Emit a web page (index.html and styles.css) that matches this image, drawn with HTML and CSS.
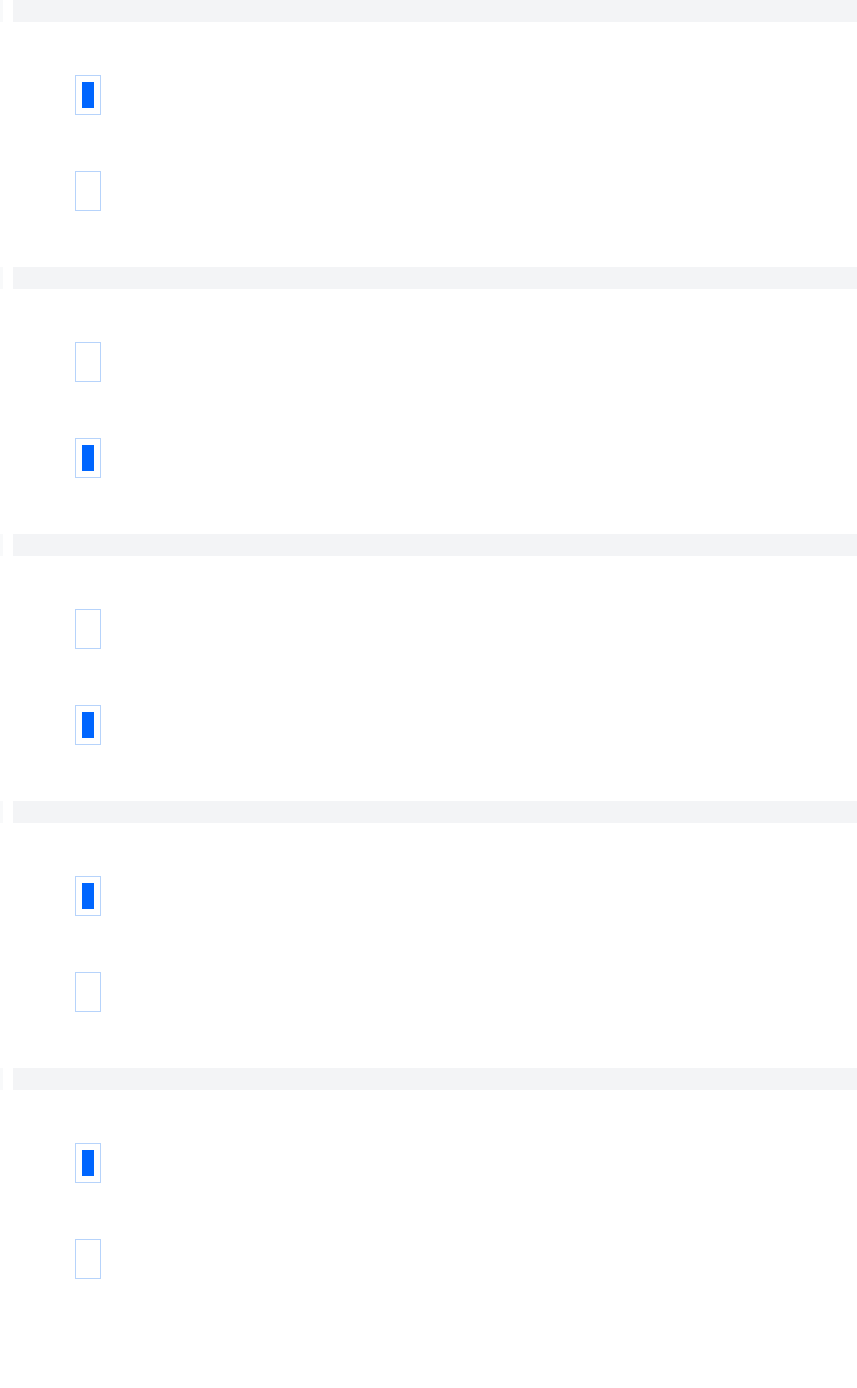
FILE: index.html
```html
<!DOCTYPE html>
<html lang="en">
<head>
<meta charset="utf-8">
<title>Toggles</title>
<link rel="stylesheet" href="styles.css">
</head>
<body>
<main class="page">
  <section class="group">
    <div class="group-head"><span class="sliver"></span><span class="bar"></span></div>
    <div class="group-body">
      <div class="row"><span class="box on"><span class="fill"></span></span></div>
      <div class="row"><span class="box"><span class="fill"></span></span></div>
    </div>
  </section>
  <section class="group">
    <div class="group-head"><span class="sliver"></span><span class="bar"></span></div>
    <div class="group-body">
      <div class="row"><span class="box"><span class="fill"></span></span></div>
      <div class="row"><span class="box on"><span class="fill"></span></span></div>
    </div>
  </section>
  <section class="group">
    <div class="group-head"><span class="sliver"></span><span class="bar"></span></div>
    <div class="group-body">
      <div class="row"><span class="box"><span class="fill"></span></span></div>
      <div class="row"><span class="box on"><span class="fill"></span></span></div>
    </div>
  </section>
  <section class="group">
    <div class="group-head"><span class="sliver"></span><span class="bar"></span></div>
    <div class="group-body">
      <div class="row"><span class="box on"><span class="fill"></span></span></div>
      <div class="row"><span class="box"><span class="fill"></span></span></div>
    </div>
  </section>
  <section class="group">
    <div class="group-head"><span class="sliver"></span><span class="bar"></span></div>
    <div class="group-body">
      <div class="row"><span class="box on"><span class="fill"></span></span></div>
      <div class="row"><span class="box"><span class="fill"></span></span></div>
    </div>
  </section>
</main>
</body>
</html>
```
FILE: styles.css
```css
html, body {
  margin: 0;
  padding: 0;
  background: #ffffff;
  font-family: "Liberation Sans", Arial, sans-serif;
}
.page {
  display: flex;
  flex-direction: column;
}
.group {
  display: flex;
  flex-direction: column;
}
.group-head {
  display: flex;
  height: 22px;
}
.sliver {
  width: 3px;
  background: #f8f9fa;
}
.bar {
  flex: 1;
  margin-left: 10px;
  background: #f3f4f6;
}
.group-body {
  display: flex;
  flex-direction: column;
  gap: 56px;
  padding: 53px 0 56px 75px;
}
.row {
  display: flex;
  height: 40px;
}
.box {
  box-sizing: border-box;
  width: 26px;
  height: 40px;
  padding: 6px;
  border: 1px solid #b6d3fb;
  display: flex;
}
.fill {
  flex: 1;
}
.box.on .fill {
  background: #0066ff;
}
```
